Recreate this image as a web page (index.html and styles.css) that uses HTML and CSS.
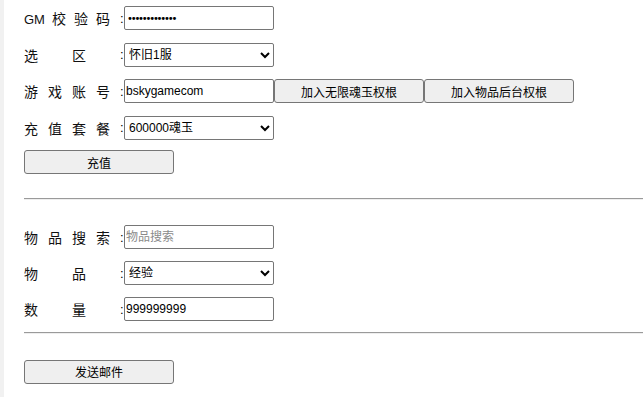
FILE: index.html
```html
<!DOCTYPE html>
<html>
<head>
<meta charset="utf-8">
<link rel="stylesheet" href="styles.css">
</head>
<body>
<div class="page">
  <div class="section first">
    <div class="row">
      <span class="label tight"><span class="latin">GM</span>校验码</span><span class="colon">:</span>
      <input class="field password" type="password" value="1234567890123">
    </div>
    <div class="row">
      <span class="label">选　区</span><span class="colon">:</span>
      <select class="field"><option>怀旧1服</option></select>
    </div>
    <div class="row">
      <span class="label">游戏账号</span><span class="colon">:</span>
      <input class="field" type="text" value="bskygamecom">
      <button class="btn">加入无限魂玉权根</button><button class="btn">加入物品后台权根</button>
    </div>
    <div class="row">
      <span class="label">充值套餐</span><span class="colon">:</span>
      <select class="field"><option>600000魂玉</option></select>
    </div>
    <button class="btn submit">充值</button>
  </div>
  <hr class="rule rule-a">
  <div class="section second">
    <div class="row">
      <span class="label">物品搜索</span><span class="colon">:</span>
      <input class="field" type="text" placeholder="物品搜索">
    </div>
    <div class="row">
      <span class="label">物　品</span><span class="colon">:</span>
      <select class="field"><option>经验</option></select>
    </div>
    <div class="row">
      <span class="label">数　量</span><span class="colon">:</span>
      <input class="field" type="text" value="999999999">
    </div>
  </div>
  <hr class="rule rule-b">
  <button class="btn submit mail">发送邮件</button>
</div>
</body>
</html>
```
FILE: styles.css
```css
html, body {
  margin: 0;
  padding: 0;
  background: #fff;
}
body {
  font-family: "Noto Sans CJK SC", "Liberation Sans", sans-serif;
  color: #000;
}
.page {
  border-left: 4px solid #f1f1f1;
  padding: 6px 0 20px 20px;
  min-height: 397px;
  box-sizing: border-box;
}
.section {
  display: flex;
  flex-direction: column;
  align-items: flex-start;
}
.first {
  gap: 12.5px;
}
.second {
  gap: 12px;
}
.row {
  display: flex;
  align-items: center;
  height: 24px;
}
.label {
  display: inline-block;
  width: 96px;
  font-size: 14px;
  letter-spacing: 10px;
  white-space: nowrap;
  color: #111;
}
.label.tight {
  letter-spacing: 8px;
}
.latin {
  display: inline-block;
  width: 28px;
  letter-spacing: 0;
  font-family: "Liberation Sans", sans-serif;
  font-size: 13px;
}
.colon {
  display: inline-block;
  width: 4px;
  font-size: 13px;
  font-family: "Liberation Sans", sans-serif;
}
.field {
  box-sizing: border-box;
  width: 150px;
  height: 24px;
  margin: 0;
  border: 1px solid #767676;
  border-radius: 2px;
  background: #fff;
  font-family: "Liberation Sans", "Noto Sans CJK SC", sans-serif;
  font-size: 12px;
  padding: 1px 1px;
  color: #000;
}
.field.password {
  font-family: "DejaVu Sans", sans-serif;
  font-size: 10px;
  letter-spacing: -2.2px;
  padding-left: 2px;
}
select.field {
  padding: 0;
}
.field::placeholder {
  color: #8a8a8a;
}
.btn {
  box-sizing: border-box;
  width: 150px;
  height: 24px;
  margin: 0;
  border: 1px solid #767676;
  border-radius: 3px;
  background: #efefef;
  font-family: "Noto Sans CJK SC", sans-serif;
  font-size: 12px;
  color: #000;
  padding: 0;
}
.submit {
  margin-top: -2px;
}
.rule {
  margin: 0;
  border: 0;
  border-top: 1px solid #9a9a9a;
  border-bottom: 1px solid #eeeeee;
  height: 0;
}
.rule-a {
  margin-top: 24px;
  margin-bottom: 25px;
}
.rule-b {
  margin-top: 11px;
  margin-bottom: 24px;
}
.mail {
  margin-top: 0;
}
```
